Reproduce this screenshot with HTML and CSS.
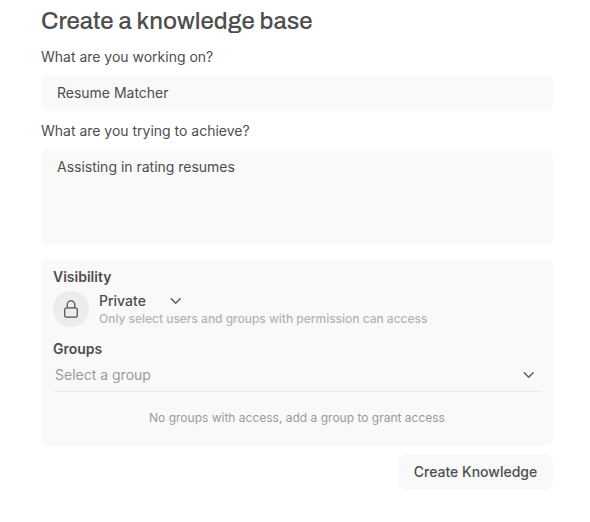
FILE: index.html
```html
<!DOCTYPE html>
<html lang="en">
<head>
<meta charset="utf-8">
<title>Create a knowledge base</title>
<link rel="stylesheet" href="styles.css">
</head>
<body>
<form class="form">
  <h1 class="title">Create a knowledge base</h1>
  <div class="label">What are you working on?</div>
  <div class="field">Resume Matcher</div>
  <div class="label label-second">What are you trying to achieve?</div>
  <div class="field field-tall">Assisting in rating resumes</div>
  <section class="access">
    <div class="heading">Visibility</div>
    <div class="visibility">
      <div class="lock">
        <svg width="20" height="20" viewBox="0 0 24 24" fill="none" stroke="currentColor" stroke-width="1.5" stroke-linecap="round" stroke-linejoin="round"><path d="M16.5 10.5V6.75a4.5 4.5 0 1 0-9 0v3.75m-.75 11.25h10.5a2.25 2.25 0 0 0 2.25-2.25v-6.75a2.25 2.25 0 0 0-2.25-2.25H6.75a2.25 2.25 0 0 0-2.25 2.25v6.75a2.25 2.25 0 0 0 2.25 2.25Z"/></svg>
      </div>
      <div>
        <div class="select">Private
          <svg class="chevron" width="16" height="16" viewBox="0 0 16 16"><path d="M3.3 5.8 7.7 10.2 12.1 5.8"/></svg>
        </div>
        <div class="hint">Only select users and groups with permission can access</div>
      </div>
    </div>
    <div class="heading groups">Groups</div>
    <div class="group-select">Select a group
      <svg class="chevron" width="16" height="16" viewBox="0 0 16 16"><path d="M3.3 5.8 7.7 10.2 12.1 5.8"/></svg>
    </div>
    <div class="empty">No groups with access, add a group to grant access</div>
  </section>
  <button class="submit" type="button">Create Knowledge</button>
</form>
</body>
</html>
```
FILE: styles.css
```css
* { box-sizing: border-box; }
body { margin: 0; background: #fff; color: #4e4e4e; font: 14px/20px Inter, sans-serif; }
.form { width: 512px; margin-left: 41px; padding-top: 5px; display: flex; flex-direction: column; }
.title { margin: 0 0 10px; font: 500 24px/32px Archivo, Inter, sans-serif; }
.label { margin-bottom: 8px; letter-spacing: -0.01px; }
.label-second { margin-top: 10px; }
.field { height: 36px; padding: 8px 16px; border-radius: 8px; background: #f9f9f9; letter-spacing: -0.01px; }
.field-tall { height: 96px; }
.access { height: 187px; margin-top: 14px; padding: 8px 12px; border-radius: 8px; background: #f9f9f9; }
.heading { font-weight: 600; }
.visibility { display: flex; gap: 10px; margin-top: 4px; }
.lock { width: 36px; height: 36px; border-radius: 50%; background: #ececec; display: grid; place-items: center; }
.select { display: flex; align-items: center; justify-content: space-between; width: 84.5px; font-weight: 500; }
.chevron { fill: none; stroke: #5b6270; stroke-width: 1.6; stroke-linecap: round; stroke-linejoin: round; }
.hint { font-size: 12px; line-height: 16px; font-weight: 500; color: #b4b4b4; letter-spacing: -0.02px; }
.groups { margin-top: 12px; }
.group-select { display: flex; align-items: center; justify-content: space-between; height: 33px; padding: 0 4.5px 0 2px; border-bottom: 1px solid #ececec; color: #9b9b9b; }
.empty { margin-top: 18px; text-align: center; font-size: 12px; line-height: 16px; color: #9b9b9b; }
.submit { align-self: flex-end; width: 155px; height: 36px; margin-top: 8px; padding: 0; border: 0; border-radius: 8px; background: #f9f9f9; color: inherit; font: 500 14px/20px Inter, sans-serif; }
```
